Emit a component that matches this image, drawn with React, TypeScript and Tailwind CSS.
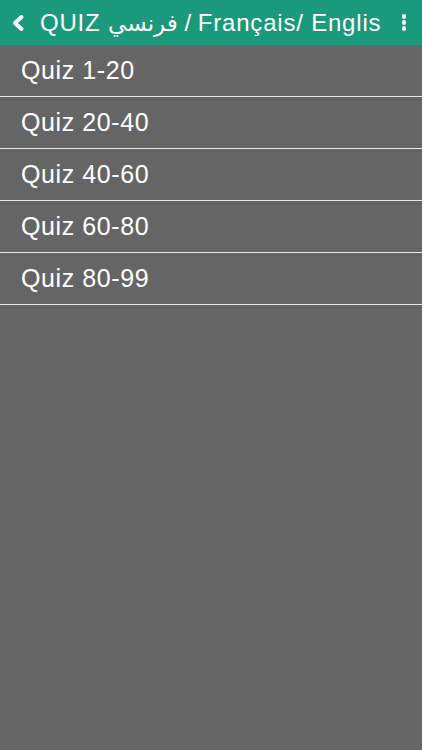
import React from "react";

const items = ["Quiz 1-20", "Quiz 20-40", "Quiz 40-60", "Quiz 60-80", "Quiz 80-99"];

export default function App() {
  return (
    <div
      className="w-[422px] h-[750px] bg-[#666565] flex flex-col overflow-hidden"
      style={{ fontFamily: '"Liberation Sans", "DejaVu Sans", sans-serif' }}
    >
      <div className="h-[45px] bg-[#1a9a7a] flex items-center text-white shrink-0">
        <svg width="14" height="18" viewBox="0 0 14 18" className="ml-[11px] mr-[15px] shrink-0">
          <path d="M10.5 3 L4 9 L10.5 15" fill="none" stroke="white" strokeWidth="4" strokeLinecap="round" strokeLinejoin="round" />
        </svg>
        <div className="text-[24px] tracking-[0.8px] leading-none whitespace-nowrap flex-1">
          QUIZ{" "}
          <span style={{ fontFamily: '"DejaVu Sans", "Noto Sans", sans-serif' }} className="text-[23px] tracking-normal">
            فرنسي
          </span>{" "}
          / Français/ Englis
        </div>
        <div className="flex flex-col gap-[1.5px] mr-[16px] shrink-0">
          <div className="w-[4.5px] h-[4.5px] rounded-full bg-white" />
          <div className="w-[4.5px] h-[4.5px] rounded-full bg-white" />
          <div className="w-[4.5px] h-[4.5px] rounded-full bg-white" />
        </div>
      </div>
      {items.map((t) => (
        <div
          key={t}
          className="h-[52px] border-b border-[#e8e8e8] flex items-center pl-[21px] text-white text-[25px] tracking-[0.6px] shrink-0"
        >
          {t}
        </div>
      ))}
    </div>
  );
}
